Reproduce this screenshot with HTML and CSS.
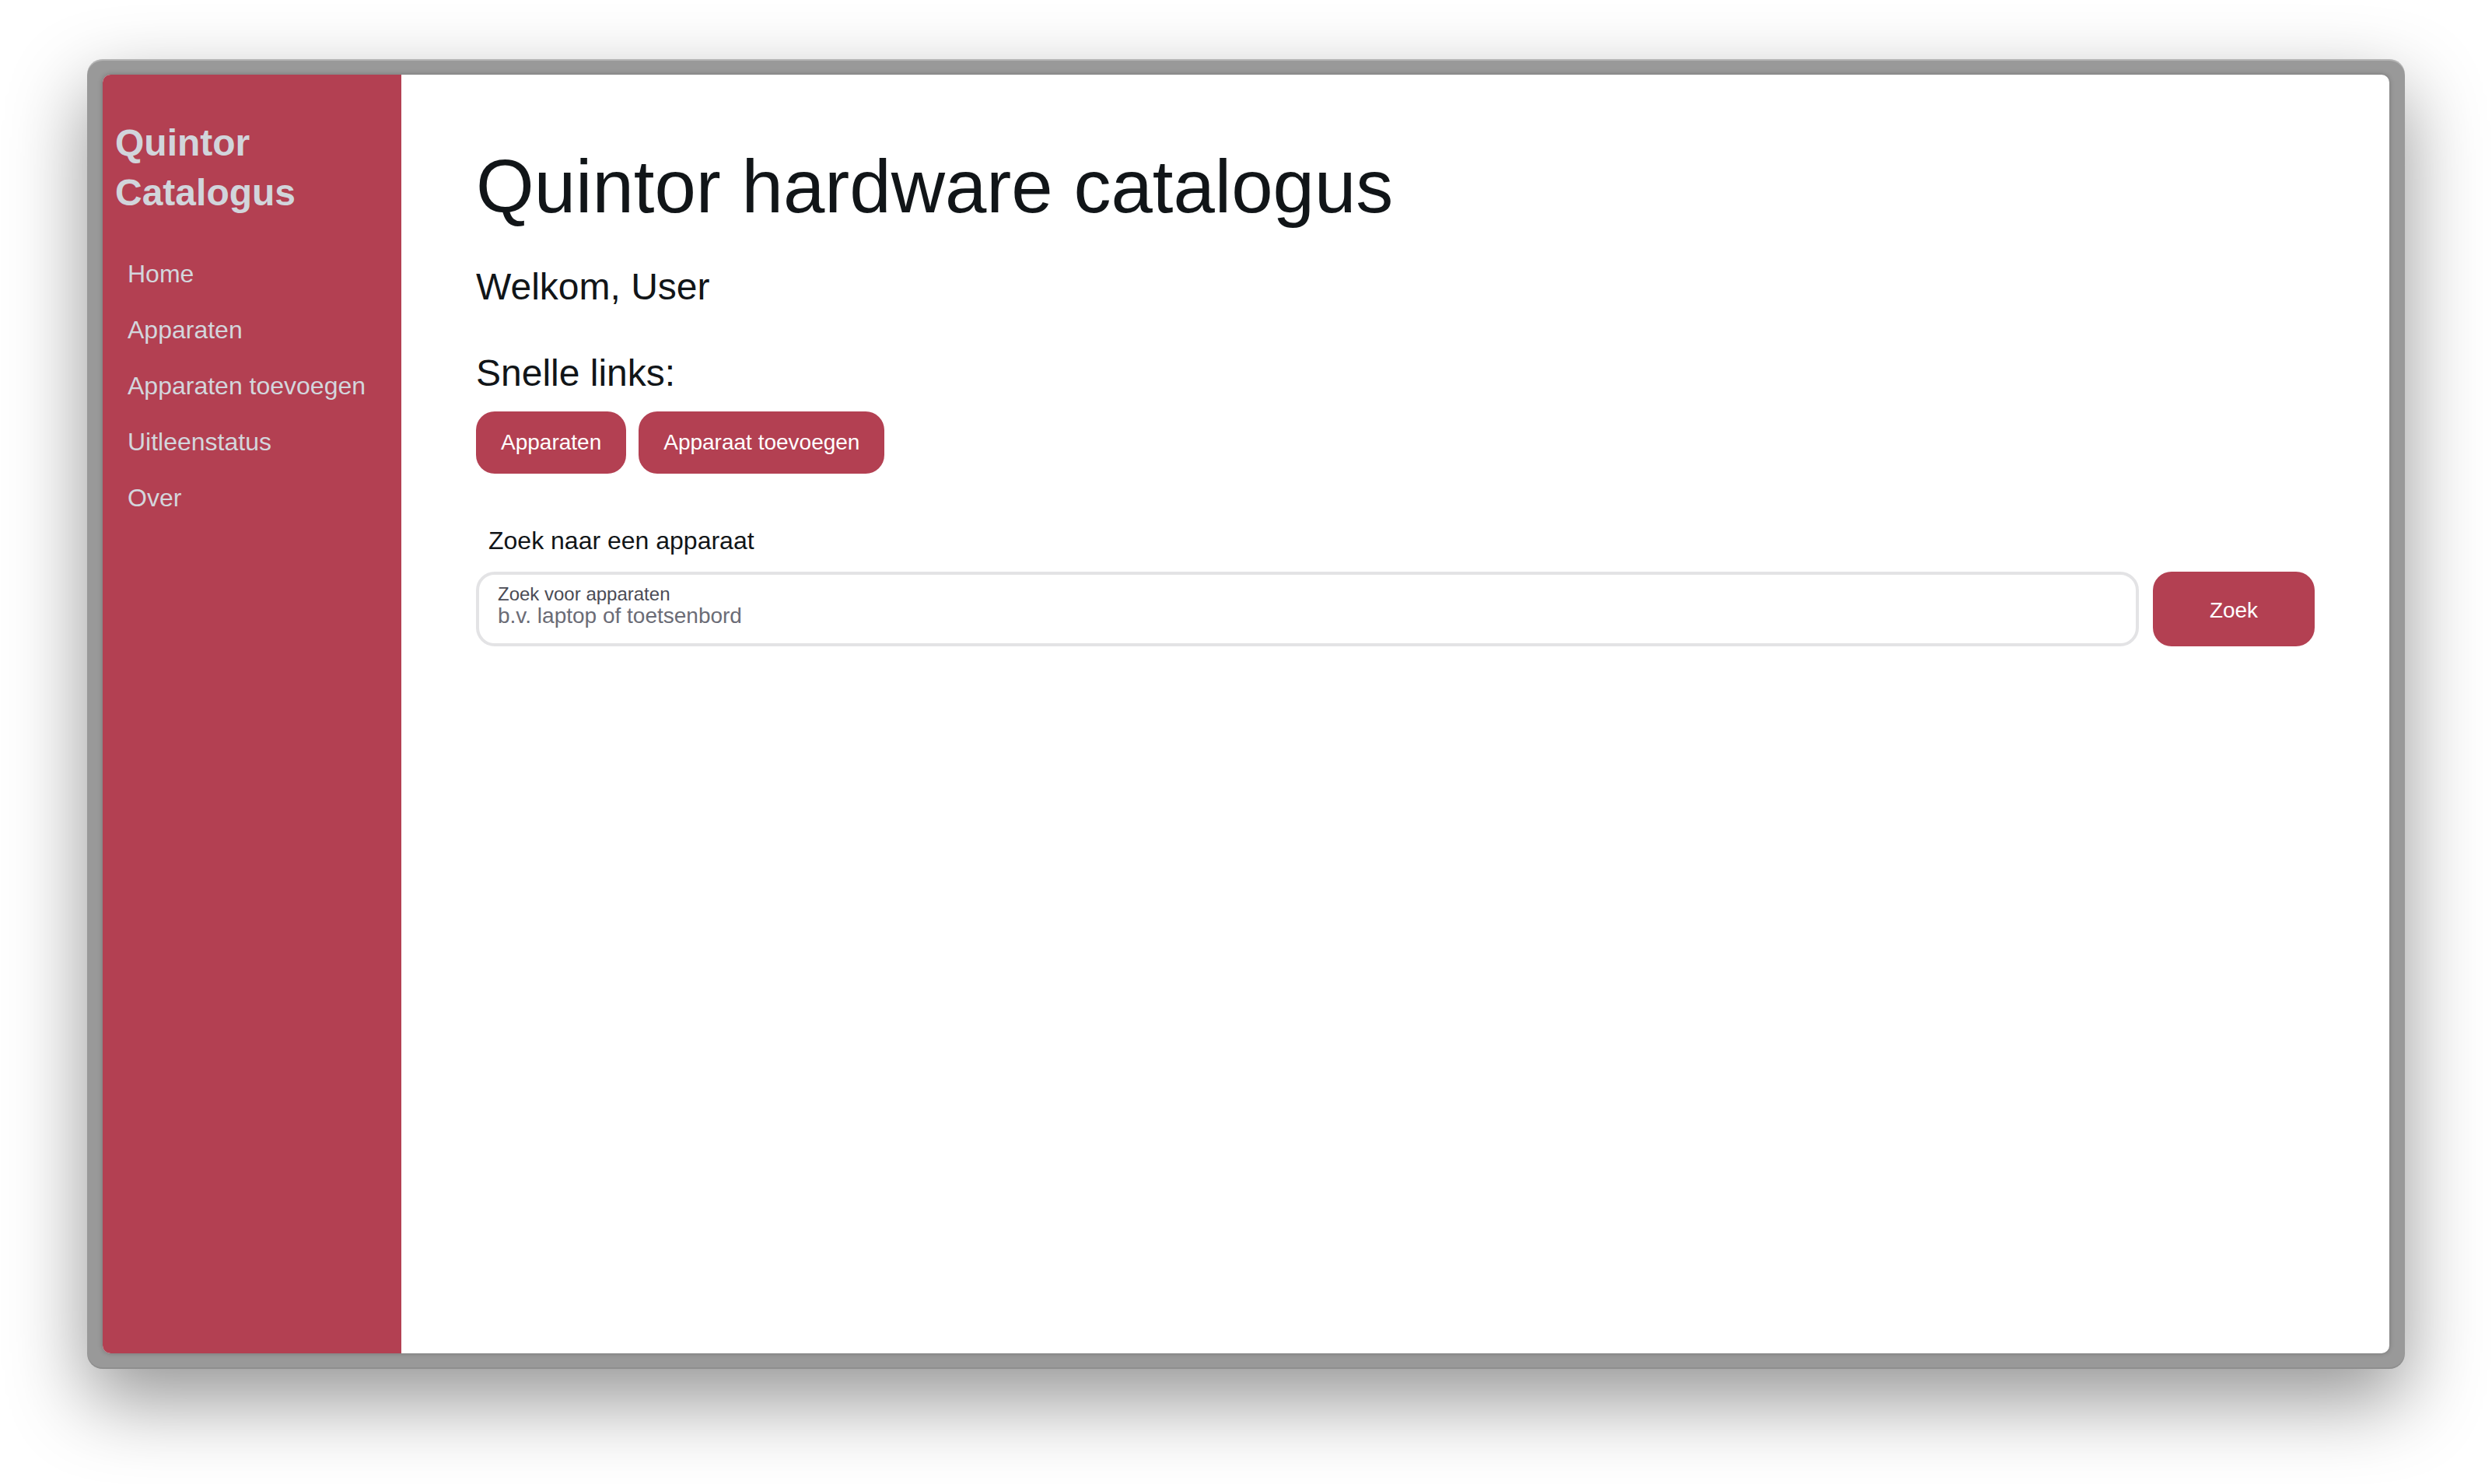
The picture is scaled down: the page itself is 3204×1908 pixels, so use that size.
FILE: index.html
```html
<!DOCTYPE html>
<html lang="nl">
<head>
<meta charset="utf-8">
<title>Quintor Catalogus</title>
<link rel="stylesheet" href="styles.css">
</head>
<body>
<div class="stage">
  <div class="frame">
    <div class="window">
      <aside class="sidebar">
        <div class="brand">Quintor<br>Catalogus</div>
        <nav class="nav">
          <a class="nav-link" href="#">Home</a>
          <a class="nav-link" href="#">Apparaten</a>
          <a class="nav-link" href="#">Apparaten toevoegen</a>
          <a class="nav-link" href="#">Uitleenstatus</a>
          <a class="nav-link" href="#">Over</a>
        </nav>
      </aside>
      <main class="main">
        <h1 class="title">Quintor hardware catalogus</h1>
        <p class="welcome">Welkom, User</p>
        <h2 class="subtitle">Snelle links:</h2>
        <div class="quick">
          <a class="btn" href="#">Apparaten</a>
          <a class="btn" href="#">Apparaat toevoegen</a>
        </div>
        <div class="search-label">Zoek naar een apparaat</div>
        <div class="search-row">
          <label class="field">
            <span class="field-label">Zoek voor apparaten</span>
            <input class="field-input" type="text" placeholder="b.v. laptop of toetsenbord">
          </label>
          <button class="btn btn-search" type="button">Zoek</button>
        </div>
      </main>
    </div>
  </div>
</div>
</body>
</html>
```
FILE: styles.css
```css
html, body {
  margin: 0;
  padding: 0;
  background: #ffffff;
}

body {
  font-family: "Liberation Sans", Arial, Helvetica, sans-serif;
  width: 3204px;
  height: 1908px;
  overflow: hidden;
}

.stage {
  padding: 76px 0 0 112px;
}

.frame {
  box-sizing: border-box;
  width: 2980px;
  height: 1684px;
  padding: 20px;
  background: #999999;
  border-radius: 20px;
  box-shadow: 0 40px 100px rgba(0, 0, 0, 0.42),
              inset 0 2px 0 rgba(255, 255, 255, 0.28),
              inset 0 -2px 0 rgba(0, 0, 0, 0.07);
}

.window {
  display: flex;
  height: 100%;
  border-radius: 10px;
  overflow: hidden;
  background: #ffffff;
  box-shadow: 0 0 6px rgba(0, 0, 0, 0.25);
}

.sidebar {
  box-sizing: border-box;
  width: 384px;
  flex: none;
  background: #b34052;
  padding: 56px 16px;
}

.brand {
  font-size: 48px;
  line-height: 64px;
  font-weight: 700;
  color: #d1d5db;
}

.nav {
  display: flex;
  flex-direction: column;
  margin-top: 36px;
}

.nav-link {
  display: block;
  padding: 12px 16px;
  font-size: 32px;
  line-height: 48px;
  color: #d3d6dc;
  text-decoration: none;
}

.main {
  flex: 1;
  padding: 96px;
  color: #111518;
}

.title {
  margin: 0;
  font-size: 96px;
  line-height: 96px;
  font-weight: 400;
}

.welcome {
  margin: 49px 0 0;
  font-size: 48px;
  line-height: 64px;
}

.subtitle {
  margin: 47px 0 0;
  font-size: 48px;
  line-height: 64px;
  font-weight: 400;
}

.quick {
  display: flex;
  gap: 16px;
  margin-top: 17px;
}

.btn {
  display: inline-block;
  padding: 20px 32px;
  font-family: inherit;
  font-size: 28px;
  line-height: 40px;
  color: #ffffff;
  background: #b34052;
  border: 0;
  border-radius: 24px;
  text-decoration: none;
}

.search-label {
  margin-top: 62px;
  padding-left: 16px;
  font-size: 32px;
  line-height: 48px;
}

.search-row {
  display: flex;
  gap: 18px;
  margin-top: 16px;
}

.field {
  box-sizing: border-box;
  flex: 1;
  height: 96px;
  display: flex;
  flex-direction: column;
  padding: 13px 24px 0;
  border: 4px solid #e3e3e5;
  border-radius: 24px;
  background: #ffffff;
}

.field-label {
  font-size: 24px;
  line-height: 24px;
  color: #4a4b55;
}

.field-input {
  margin: 1px 0 0;
  padding: 0;
  border: 0;
  outline: none;
  height: 30px;
  font-family: inherit;
  font-size: 28px;
  line-height: 30px;
  color: #111518;
  background: transparent;
}

.field-input::placeholder {
  color: #6b6c76;
  opacity: 1;
}

.btn-search {
  width: 208px;
  height: 96px;
  padding: 3px 0 0;
  text-align: center;
}
```
